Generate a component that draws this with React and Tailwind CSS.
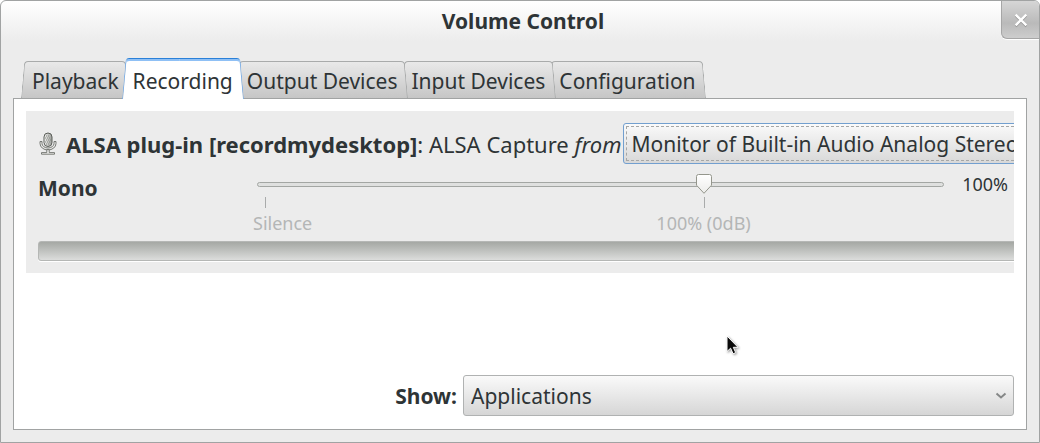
import React, { useState } from 'react'

const TABS = ['Playback', 'Recording', 'Output Devices', 'Input Devices', 'Configuration']
const STACKING = ['z-10', 'z-30', 'z-20', 'z-10', 'z-0']
const MAX_VOLUME = 153

const TabItem = ({ label, active, stacking, onSelect }) => {
    const shape = active
        ? 'before:border-t-[#2a80d8] after:border-t-[#2a80d8] before:shadow-[inset_0_2px_0_#8fc0f5] after:shadow-[inset_0_2px_0_#8fc0f5] before:from-white before:to-white after:from-white after:to-white before:border-l-[#7fb0e6] after:border-r-[#7fb0e6] before:-bottom-px after:-bottom-px before:top-0 after:top-0'
        : 'before:border-[#a9abab] after:border-[#a9abab] before:from-[#e9e9e9] before:to-[#c6c6c6] after:from-[#e9e9e9] after:to-[#c6c6c6] before:bottom-0 after:bottom-0 before:top-[3px] after:top-[3px]'
    return (
        <button
            type="button"
            role="tab"
            aria-selected={active}
            onClick={onSelect}
            className={`relative isolate -ml-2 h-10 px-[11px] pt-1.5 whitespace-nowrap first:ml-0 before:absolute before:left-0 before:right-1/2 before:-z-10 before:origin-bottom before:skew-x-[-5deg] before:rounded-tl before:border-t before:border-l before:bg-linear-to-b before:content-[''] after:absolute after:left-1/2 after:right-0 after:-z-10 after:origin-bottom after:skew-x-[5deg] after:rounded-tr after:border-t after:border-r after:bg-linear-to-b after:content-[''] ${shape} ${stacking}`}
        >
            {label}
        </button>
    )
}

const MicIcon = () => (
    <svg width="20" height="24" viewBox="-1 0 20 24" className="shrink-0" aria-hidden="true">
        <defs>
            <linearGradient id="mic" x1="0" y1="0" x2="1" y2="0">
                <stop offset="0" stopColor="#f4f4f2" />
                <stop offset="1" stopColor="#9a9c98" />
            </linearGradient>
        </defs>
        <path d="M1 9.5v2a8 6.5 0 0 0 16 0v-2h-2v2a6 4.5 0 0 1-12 0v-2z" fill="#e8e8e6" stroke="#6b6e69" strokeWidth=".9" />
        <path d="M7.8 17.6h2.4v3h5.3v1.6h-13v-1.6h5.3z" fill="#f2f2f0" stroke="#6b6e69" strokeWidth=".9" />
        <rect x="5" y="1" width="8" height="13.5" rx="4" fill="url(#mic)" stroke="#5b5e59" />
        <path d="M7 4h1M9 4h1M6 6h1M8 6h1M10 6h1M7 8h1M9 8h1M11 8h1M6 10h1M8 10h1M10 10h1M7 12h1M9 12h1" stroke="#858883" />
    </svg>
)

const VolumeSlider = ({ volume, setVolume }) => {
    const position = { left: `${(volume / MAX_VOLUME) * 100}%` }
    const basePosition = { left: `${(100 / MAX_VOLUME) * 100}%` }
    return (
        <div className="relative h-[66px] flex-1 text-lg text-[#b4b6b6]">
            <div className="mt-[12px] h-[5px] rounded-sm border border-[#a3a6a3] bg-[#dfe0df]"></div>
            <div className="absolute inset-x-2 top-0">
                <span className="absolute top-[27px] left-0 h-[11px] w-px bg-[#a9abab]"></span>
                <span className="absolute top-[27px] h-[11px] w-px bg-[#a9abab]" style={basePosition}></span>
                <span className="absolute top-[39px] -left-3">Silence</span>
                <span className="absolute top-[39px] -translate-x-1/2 whitespace-nowrap" style={basePosition}>100% (0dB)</span>
                <svg width="18" height="21" viewBox="0 0 18 21" className="absolute top-1 -translate-x-1/2" style={position} aria-hidden="true">
                    <defs>
                        <linearGradient id="thumb" x1="0" y1="0" x2="0" y2="1">
                            <stop offset="0" stopColor="#ffffff" />
                            <stop offset="1" stopColor="#ececea" />
                        </linearGradient>
                    </defs>
                    <path d="M3.5.5h11q2 0 2 2v8.7L9 19.3 1.5 11.2V2.5q0-2 2-2z" fill="url(#thumb)" stroke="#94968c" />
                </svg>
            </div>
            <input
                type="range"
                id="mono"
                min="0"
                max={MAX_VOLUME}
                value={volume}
                onChange={(e) => setVolume(parseInt(e.target.value))}
                className="absolute inset-x-0 top-1 h-5 w-full cursor-pointer opacity-0"
            />
        </div>
    )
}

const StreamCard = () => {
    const [volume, setVolume] = useState(100)
    return (
        <div className="overflow-hidden bg-[#ececec] py-3 pl-3">
            <div className="w-[calc(100%+48px)]">
                <div className="flex items-center whitespace-nowrap">
                    <MicIcon />
                    <label htmlFor="source" className="ml-2 text-[22px]">
                        <b>ALSA plug-in [recordmydesktop]</b>: ALSA Capture <i>from</i>
                    </label>
                    <select
                        id="source"
                        className="ml-0.5 h-[41px] min-w-0 flex-1 appearance-none rounded-[3px] border border-[#729fcf] bg-linear-to-b from-[#fafafa] to-[#d8d8d8] px-[7px] outline-1 -outline-offset-4 outline-[#a5a7a7] outline-dashed"
                    >
                        <option>Monitor of Built-in Audio Analog Stereo</option>
                    </select>
                </div>
                <div className="mt-1.5 flex pr-[54px]">
                    <label htmlFor="mono" className="w-[219px] pt-1 font-bold">Mono</label>
                    <VolumeSlider volume={volume} setVolume={setVolume} />
                    <output htmlFor="mono" className="w-16 text-right text-lg">
                        {Math.round(volume)}%
                    </output>
                </div>
                <div className="mt-[5px] h-5 rounded-[3px] border border-[#b5b7b5] bg-linear-to-b from-[#a5a8a4] to-[#dcdddc] shadow-[0_1px_0_#ffffff]"></div>
            </div>
        </div>
    )
}

const App = () => {
    const [tab, setTab] = useState('Recording')
    return (
        <div className="relative flex min-h-screen flex-col overflow-hidden rounded-t-md border border-[#a1a3a3] bg-[#ececec] bg-[linear-gradient(#ffffff,#ececec_40px)] font-['Noto_Sans',sans-serif] text-[21px] leading-7 text-[#2e3436]">
            <header className="grid grid-cols-[1fr_38px] items-center">
                <h1 className="pt-0.5 pl-11 text-center font-bold">Volume Control</h1>
                <button
                    type="button"
                    aria-label="Close"
                    className="flex h-[38px] items-center justify-center rounded-bl-md border-b border-l border-[#a6a6a6] bg-linear-to-b from-[#d6d6d6] via-[#bababa] via-60% to-[#cdcdcd] shadow-[0_1px_0_#ffffff]"
                >
                    <svg width="16" height="17" viewBox="0 0 16 17" fill="none" strokeWidth="2.4" strokeLinecap="square" aria-hidden="true">
                        <path d="m3.5 5.5 9 9m0-9-9 9" stroke="#959595" />
                        <path d="m3.5 4.5 9 9m0-9-9 9" stroke="#ffffff" />
                    </svg>
                </button>
            </header>

            <div role="tablist" className="mt-[19px] ml-5 flex">
                {TABS.map((item, index) => (
                    <TabItem key={item} label={item} active={item === tab} stacking={STACKING[index]} onSelect={() => setTab(item)} />
                ))}
            </div>

            <main className="mx-3 mb-3 flex flex-1 flex-col border border-[#a1a3a3] bg-white p-3 pb-[13px]">
                <StreamCard />
                <div className="mt-auto flex items-center justify-end">
                    <label htmlFor="show" className="mr-1.5 font-bold">Show:</label>
                    <div className="relative w-[56%] max-w-[551px]">
                        <select
                            id="show"
                            className="h-[41px] w-full appearance-none rounded-[3px] border border-[#b0b2b2] bg-linear-to-b from-[#fafafa] to-[#d6d6d6] px-[7px]"
                        >
                            <option>Applications</option>
                        </select>
                        <svg width="12" height="8" viewBox="0 0 12 8" className="pointer-events-none absolute top-[17px] right-[7px]" aria-hidden="true">
                            <path d="m1.5 1.5 4.5 4 4.5-4" fill="none" stroke="#858787" strokeWidth="2" />
                        </svg>
                    </div>
                </div>
            </main>

            <svg width="14" height="22" viewBox="0 0 14 22" className="pointer-events-none absolute top-[334px] left-[725px] z-40 drop-shadow-[1px_1px_1px_rgba(0,0,0,0.4)]" aria-hidden="true">
                <path d="M1 1v15.5l3.6-3.3 2.5 5.6 2.6-1.2-2.4-5.3H12z" fill="#0a0a0a" stroke="#ffffff" />
            </svg>
        </div>
    )
}

export default App
